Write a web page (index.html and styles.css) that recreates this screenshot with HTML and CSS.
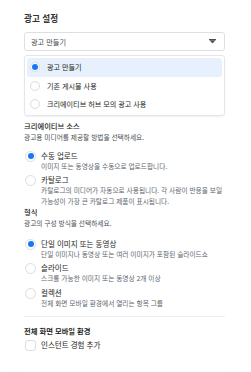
FILE: index.html
```html
<!DOCTYPE html>
<html lang="ko">
<head>
<meta charset="utf-8">
<link rel="stylesheet" href="styles.css">
</head>
<body>
<div class="card">
  <div class="title">광고 설정</div>
  <div class="select">
    <span>광고 만들기</span>
    <svg class="caret" width="7" height="5" viewBox="0 0 7 5"><rect x="0" y="0" width="7" height="1.2" fill="#4b4f56"/><path d="M0.5 1.2 L6.5 1.2 L3.5 4.6 Z" fill="#4b4f56"/></svg>
  </div>
  <div class="menu">
    <div class="menu-item active"><span class="radio on"></span><span>광고 만들기</span></div>
    <div class="menu-item"><span class="radio"></span><span>기존 게시물 사용</span></div>
    <div class="menu-item"><span class="radio"></span><span>크리에이티브 허브 모의 광고 사용</span></div>
  </div>

  <div class="section first">
    <div class="heading">크리에이티브 소스</div>
    <div class="desc">광고용 미디어를 제공할 방법을 선택하세요.</div>
    <div class="options">
      <div class="option">
        <span class="radio on"></span>
        <div class="opt-text">
          <div class="label">수동 업로드</div>
          <div class="sub">이미지 또는 동영상을 수동으로 업로드합니다.</div>
        </div>
      </div>
      <div class="option">
        <span class="radio"></span>
        <div class="opt-text">
          <div class="label">카탈로그</div>
          <div class="sub">카탈로그의 미디어가 자동으로 사용됩니다. 각 사람이 반응을 보일 가능성이 가장 큰 카탈로그 제품이 표시됩니다.</div>
        </div>
      </div>
    </div>
  </div>

  <div class="section second">
    <div class="heading">형식</div>
    <div class="desc">광고의 구성 방식을 선택하세요.</div>
    <div class="options">
      <div class="option">
        <span class="radio on"></span>
        <div class="opt-text">
          <div class="label">단일 이미지 또는 동영상</div>
          <div class="sub">단일 이미지나 동영상 또는 여러 이미지가 포함된 슬라이드쇼</div>
        </div>
      </div>
      <div class="option">
        <span class="radio"></span>
        <div class="opt-text">
          <div class="label">슬라이드</div>
          <div class="sub">스크롤 가능한 이미지 또는 동영상 2개 이상</div>
        </div>
      </div>
      <div class="option">
        <span class="radio"></span>
        <div class="opt-text">
          <div class="label">컬렉션</div>
          <div class="sub">전체 화면 모바일 환경에서 열리는 항목 그룹</div>
        </div>
      </div>
    </div>
  </div>

  <div class="divider"></div>

  <div class="section third">
    <div class="heading strong">전체 화면 모바일 환경</div>
    <div class="check-row">
      <span class="checkbox"></span>
      <span class="label">인스턴트 경험 추가</span>
    </div>
  </div>
</div>
</body>
</html>
```

FILE: styles.css
```css
* { box-sizing: border-box; }
html, body { margin: 0; padding: 0; background: #ffffff; }
body {
  font-family: "Noto Sans CJK KR", "Noto Sans", sans-serif;
  color: #1c1e21;
}
.card {
  margin: 6px 17px 0 15px;
  padding: 6px 9px 20px 9px;
  border-radius: 4px;
  box-shadow: 0 0 1px rgba(0,0,0,0.04);
  min-height: 366px;
}
.title {
  font-size: 8.6px;
  font-weight: 700;
  line-height: 12px;
  color: #333;
}
.select {
  margin-top: 8px;
  height: 19px;
  border: 1px solid #dddfe2;
  border-radius: 3px;
  display: flex;
  align-items: center;
  justify-content: space-between;
  padding: 0 8px 0 6px;
  font-size: 7.2px;
  color: #444950;
}
.caret { display: block; }
.menu {
  margin-top: 4px;
  border: 1px solid #e4e6eb;
  border-radius: 3px;
  box-shadow: 0 1px 2px rgba(0,0,0,0.06);
  padding: 2px 2px 1px 2px;
}
.menu-item {
  height: 18.5px;
  display: flex;
  align-items: center;
  gap: 7px;
  padding-left: 3px;
  font-size: 7.1px;
  color: #1c1e21;
  border-radius: 3px;
}
.menu-item .radio { width: 10px; height: 10px; }
.menu-item .radio.on::after { width: 6px; height: 6px; }
.menu-item.active { background: #e7f0fd; }
.radio {
  flex: none;
  width: 11px;
  height: 11px;
  border-radius: 50%;
  border: 1px solid #dadde1;
  background: #fff;
  display: flex;
  align-items: center;
  justify-content: center;
}
.radio.on::after {
  content: "";
  width: 6px;
  height: 6px;
  border-radius: 50%;
  background: #1877f2;
}
.section.first { margin-top: 5px; }
.section.second { margin-top: 1px; }
.section.third { margin-top: 9px; }
.heading {
  font-size: 7.3px;
  font-weight: 500;
  line-height: 11px;
  color: #1c1e21;
}
.heading.strong { font-weight: 700; }
.desc {
  font-size: 6.7px;
  line-height: 11.5px;
  color: #4b4f56;
}
.options {
  margin-top: 7.5px;
  display: flex;
  flex-direction: column;
  gap: 4px;
}
.second .options { margin-top: 9px; }
.option {
  display: flex;
  align-items: flex-start;
  gap: 5px;
  padding-left: 1px;
}
.opt-text { flex: 1; }
.label {
  font-size: 7.5px;
  line-height: 10px;
  color: #1c1e21;
}
.sub {
  font-size: 6.7px;
  line-height: 10.5px;
  color: #606770;
}
.divider {
  margin-top: 8px;
  height: 1px;
  background: #ebedf0;
}
.check-row {
  margin-top: 2.5px;
  display: flex;
  align-items: center;
  gap: 5px;
  padding-left: 1px;
}
.checkbox {
  width: 11px;
  height: 11px;
  border: 1px solid #dadde1;
  border-radius: 3px;
  background: #fff;
}
```
